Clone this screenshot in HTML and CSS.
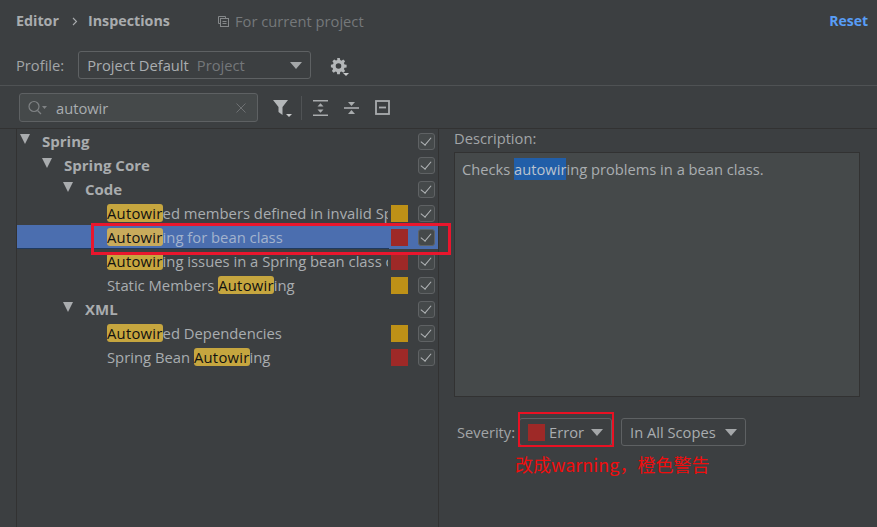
FILE: index.html
```html
<!DOCTYPE html>
<html lang="en">
<head>
<meta charset="utf-8">
<title>Inspections</title>
<link rel="stylesheet" href="styles.css">
</head>
<body>
<div class="page">
  <header class="crumbs">
    <span class="crumb">Editor</span>
    <svg class="crumb-sep" width="6" height="9" viewBox="0 0 6 9"><path d="M1 1l3.500 3.500L1 8" fill="none" stroke="#a9acae" stroke-width="1.100"/></svg>
    <span class="crumb">Inspections</span>
    <span class="scope">
      <svg width="11" height="11" viewBox="0 0 11 11"><path d="M.5.500h7v2M.5.500v7h2" fill="none" stroke="#85888a"/><rect x="2.500" y="2.500" width="8" height="8" fill="none" stroke="#85888a"/><path d="M4.500 5.500h4M4.500 7.500h4" stroke="#85888a"/></svg>
      For current project
    </span>
    <a class="reset">Reset</a>
  </header>

  <div class="profile-row">
    <span class="label">Profile:</span>
    <div class="combo profile-combo">
      <span>Project Default</span><span class="dim">Project</span>
      <i class="arrow push"></i>
    </div>
    <span class="gear">
      <svg width="18" height="18" viewBox="0 0 18 18"><path fill="#b4b7b9" fill-rule="evenodd" d="M7.200 1h2.600l.4 2.100 1.300.6 1.800-1.200 1.800 1.800-1.200 1.800.6 1.300 2.100.4v2.600l-2.100.4-.6 1.300 1.200 1.800-1.800 1.800-1.800-1.200-1.300.6-.4 2.100H7.200l-.4-2.100-1.300-.6-1.800 1.200-1.800-1.800 1.200-1.800-.6-1.300L.9 10.300V7.700l2.100-.4.6-1.300-1.200-1.800 1.800-1.800 1.800 1.200 1.300-.6zM8.500 6.200a2.800 2.800 0 1 0 0 5.600 2.800 2.800 0 0 0 0-5.600z"/></svg>
      <i class="mini-arrow gear-arrow"></i>
    </span>
  </div>

  <div class="search-row">
    <div class="search">
      <svg width="20" height="16" viewBox="0 0 20 16"><circle cx="7" cy="6.500" r="5" fill="none" stroke="#7f8284" stroke-width="1.200"/><path d="M10.500 10.500L14 14" stroke="#7f8284" stroke-width="1.200"/><path d="M15 6h5l-2.500 3z" fill="#7f8284"/></svg>
      <span class="search-text">autowir</span>
      <svg class="push" width="10" height="10" viewBox="0 0 10 10"><path d="M.5.500l9 9M9.500.500l-9 9" stroke="#6e7173" stroke-width="1"/></svg>
    </div>
    <div class="tools">
      <span class="tool filter">
        <svg width="15" height="15" viewBox="0 0 15 15"><path d="M0 0h15L9.500 7v8L5.500 12V7z" fill="#b4b7b9"/></svg>
        <i class="mini-arrow filter-arrow"></i>
      </span>
      <span class="tool-sep"></span>
      <svg width="15" height="16" viewBox="0 0 15 16"><path d="M0 .8h15M0 15.200h15" stroke="#a9acae" stroke-width="1.600" fill="none"/><path d="M7.500 3.200L10.500 6.500h-6zM7.500 12.800L4.500 9.500h6z" fill="#a9acae"/></svg>
      <svg width="15" height="16" viewBox="0 0 15 16"><path d="M0 8h15" stroke="#a9acae" stroke-width="1.600"/><path d="M7.500 6L4 2h7zM7.500 10L11 14H4z" fill="#a9acae"/></svg>
      <svg width="15" height="15" viewBox="0 0 15 15"><rect x="1" y="1" width="13" height="13" fill="none" stroke="#a9acae" stroke-width="1.800"/><path d="M4 7.500h7" stroke="#a9acae" stroke-width="1.800"/></svg>
    </div>
  </div>

  <main class="split">
    <section class="tree">
      <div class="row lv0 bold"><i class="tri"></i><span class="name">Spring</span><span class="check"></span></div>
      <div class="row lv1 bold"><i class="tri"></i><span class="name">Spring Core</span><span class="check"></span></div>
      <div class="row lv2 bold"><i class="tri"></i><span class="name">Code</span><span class="check"></span></div>
      <div class="row lv3"><span class="name"><mark>Autowir</mark>ed members defined in invalid Spring bean</span><span class="sev warn"></span><span class="check"></span></div>
      <div class="row lv3 selected"><span class="name"><mark>Autowir</mark>ing for bean class</span><span class="sev err"></span><span class="check"></span></div>
      <div class="row lv3"><span class="name"><mark>Autowir</mark>ing issues in a Spring bean class constructor</span><span class="sev err"></span><span class="check"></span></div>
      <div class="row lv3"><span class="name">Static Members <mark>Autowir</mark>ing</span><span class="sev warn"></span><span class="check"></span></div>
      <div class="row lv2 bold"><i class="tri"></i><span class="name">XML</span><span class="check"></span></div>
      <div class="row lv3"><span class="name"><mark>Autowir</mark>ed Dependencies</span><span class="sev warn"></span><span class="check"></span></div>
      <div class="row lv3"><span class="name">Spring Bean <mark>Autowir</mark>ing</span><span class="sev err"></span><span class="check"></span></div>
    </section>

    <section class="details">
      <div class="desc-title">Description:</div>
      <div class="desc">Checks <span class="hl">autowir</span>ing problems in a bean class.</div>
      <div class="severity">
        <span class="label">Severity:</span>
        <div class="combo sev-combo"><span class="sev err"></span><span>Error</span><i class="arrow push"></i></div>
        <div class="combo scope-combo"><span>In All Scopes</span><i class="arrow push"></i></div>
      </div>
    </section>
  </main>

  <div class="note note-row"></div>
  <div class="note note-sev"></div>
  <div class="note-text">改成warning，橙色警告</div>
</div>
</body>
</html>
```

FILE: styles.css
```css
* { box-sizing: border-box; }
html, body { margin: 0; height: 100%; }
body { background: #3c3f41; overflow: hidden; }
.page {
  position: relative;
  width: 877px;
  height: 527px;
  overflow: hidden;
  display: flex;
  flex-direction: column;
  font: 14.700px/20px "Open Sans", "Noto Sans", sans-serif;
  color: #a9adb0;
}
.push { margin-left: auto; }

.crumbs {
  height: 42px;
  flex: none;
  display: flex;
  align-items: center;
  padding: 0 9px 0 16px;
}
.crumb { font-weight: 700; font-size: 14.300px; color: #a9acae; }
.crumb-sep { margin: 0 10px 0 13px; }
.scope { margin-left: 48px; display: flex; align-items: center; gap: 6px; color: #75787a; }
.reset { margin-left: auto; font-weight: 700; font-size: 14px; color: #589df6; }

.profile-row {
  height: 44px;
  flex: none;
  display: flex;
  align-items: center;
  padding-left: 16px;
  padding-top: 3px;
  border-bottom: 1px solid #4f5254;
}
.label { color: #a2a5a7; }
.combo {
  display: flex;
  align-items: center;
  height: 28px;
  border: 1px solid #5e6163;
  border-radius: 3px;
  background: #3c3f41;
  color: #a9adb0;
}
.dim { color: #74777a; }
.arrow {
  width: 0; height: 0;
  border-left: 6px solid transparent;
  border-right: 6px solid transparent;
  border-top: 7px solid #a4a7a9;
}
.profile-combo { width: 233px; margin-left: 14px; padding: 0 8px; gap: 8px; }
.gear { position: relative; margin-left: 19px; display: flex; margin-top: 2px; }
.mini-arrow {
  position: absolute;
  width: 0; height: 0;
  border-left: 3px solid transparent;
  border-right: 3px solid transparent;
  border-top: 3px solid #c8cacb;
}
.gear-arrow { right: -1px; bottom: -1px; }

.search-row {
  height: 43px;
  flex: none;
  display: flex;
  align-items: center;
  padding: 1px 0 0 19px;
  border-bottom: 1px solid #323232;
}
.search {
  width: 239px;
  height: 29px;
  display: flex;
  align-items: center;
  padding: 0 11px 0 7px;
  background: #45494a;
  border: 1px solid #5e6163;
  border-radius: 3px;
}
.search-text { margin-left: 9px; color: #a9adb0; }
.tools { display: flex; align-items: center; margin-left: 15px; gap: 16px; }
.tool { position: relative; display: flex; }
.filter-arrow { right: -4px; bottom: -2px; }
.tool-sep { width: 1px; height: 24px; background: #505355; margin: 0 -5px 0 -3px; }

.split { flex: 1; display: flex; min-height: 0; }
.tree {
  width: 423px;
  margin-left: 16px;
  flex: none;
  border-left: 1px solid #323232;
  border-right: 1px solid #323232;
}
.row {
  position: relative;
  height: 24px;
  display: flex;
  align-items: center;
  padding-right: 3px;
}
.bold { font-weight: 700; font-size: 15px; color: #a9acae; }
.lv0 { padding-left: 3px; }
.lv1 { padding-left: 25px; }
.lv2 { padding-left: 46px; }
.lv3 { padding-left: 90px; font-size: 14.800px; }
.tri {
  width: 0; height: 0;
  flex: none;
  margin-right: 12px;
  margin-top: -4px;
  border-left: 5.500px solid transparent;
  border-right: 5.500px solid transparent;
  border-top: 10px solid #a9acae;
}
.name {
  flex: 1;
  min-width: 0;
  white-space: nowrap;
  overflow: hidden;
  margin-right: 3px;
  line-height: 20px;
}
.sev { width: 17px; height: 17px; flex: none; }
.warn { background: #be9117; }
.err { background: #9e2927; }
.row .sev { margin-right: 10px; }
.check {
  position: relative;
  width: 17px;
  height: 17px;
  flex: none;
  border: 1px solid #5f6264;
  border-radius: 3px;
  background: #45494a;
}
.check::after {
  content: "";
  position: absolute;
  left: 4px;
  top: 1.500px;
  width: 5px;
  height: 9px;
  border: solid #b4b7b9;
  border-width: 0 1.600px 1.600px 0;
  transform: rotate(40deg);
}
mark {
  display: inline-block;
  height: 18px;
  line-height: 18px;
  background: #c6a63f;
  color: #111;
  border-radius: 3px;
  vertical-align: top;
  margin-top: 1px;
  letter-spacing: .25px;
}
.selected { background: #4b6eaf; }
.selected .name { color: #a3b3cd; }
.selected mark { background: #c8ab5c; }
.selected::after {
  content: "";
  position: absolute;
  left: 0;
  bottom: 0;
  width: 372px;
  height: 1px;
  background: #1f3a5f;
}

.details { flex: 1; padding: 0 17px 0 15px; display: flex; flex-direction: column; }
.desc-title { height: 23px; line-height: 18px; color: #a2a5a7; }
.desc {
  height: 245px;
  padding: 6px 7px;
  background: #45494a;
  border: 1px solid #323232;
  color: #a9adb0;
  line-height: 20px;
}
.hl { color: #bbc3cf; padding: 1px 0; background-color: #215ea8; }
.severity { display: flex; align-items: center; margin-top: 21px; padding-left: 3px; }
.sev-combo { width: 93px; margin-left: 4px; padding: 0 8px; gap: 4px; }
.scope-combo { width: 125px; margin-left: 9px; padding: 0 8px; }

.note { position: absolute; border: 2px solid #e9162d; pointer-events: none; }
.note-row { left: 91px; top: 223px; width: 360px; height: 32px; border-width: 3px; }
.note-sev { left: 518px; top: 412px; width: 96px; height: 35px; border-color: #e81123; }
.note-text {
  position: absolute;
  left: 515px;
  top: 453px;
  font: 18px/22px "Noto Sans CJK SC", sans-serif;
  color: #f00d0d;
}
```
